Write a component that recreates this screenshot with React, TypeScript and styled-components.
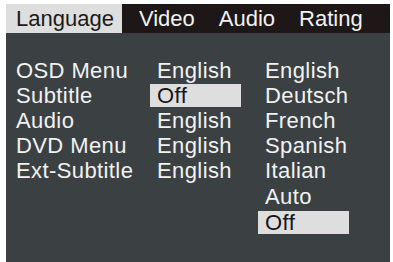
import * as React from 'react';
import styled, { createGlobalStyle } from 'styled-components';

const GlobalStyle = createGlobalStyle`
    html, body {
        margin: 0;
        padding: 0;
        background: #ffffff;
    }
    body {
        font-family: "Liberation Sans", Arial, sans-serif;
    }
`;

const tabs = ['Language', 'Video', 'Audio', 'Rating'];

const labels = ['OSD Menu', 'Subtitle', 'Audio', 'DVD Menu', 'Ext-Subtitle'];
const values = ['English', 'Off', 'English', 'English', 'English'];
const options = ['English', 'Deutsch', 'French', 'Spanish', 'Italian', 'Auto', 'Off'];

export default function App() {
    return (
        <React.Fragment>
            <GlobalStyle />
            <Screen>
                <Panel>
                    <TabBar>
                        {tabs.map((tab, i) => (
                            <Tab key={tab} active={i === 0}>{tab}</Tab>
                        ))}
                    </TabBar>
                    <Body>
                        <LabelColumn>
                            {labels.map((label) => (
                                <Row key={label}>{label}</Row>
                            ))}
                        </LabelColumn>
                        <ValueColumn>
                            {values.map((value, i) => (
                                <Item key={i} selected={i === 1}>{value}</Item>
                            ))}
                        </ValueColumn>
                        <ValueColumn>
                            {options.map((option, i) => (
                                <Item key={option} selected={i === options.length - 1}>{option}</Item>
                            ))}
                        </ValueColumn>
                    </Body>
                </Panel>
            </Screen>
        </React.Fragment>
    );
}

const Screen = styled.div`
    width: 393px;
    height: 262px;
    padding: 4px 3px 0 6px;
    box-sizing: border-box;
    display: flex;
`;

const Panel = styled.div`
    flex: 1;
    display: flex;
    flex-direction: column;
    background: #3b4143;
`;

const TabBar = styled.div`
    display: flex;
    height: 29px;
    background: #1d1817;
`;

const Tab = styled.div<{ active?: boolean }>`
    display: flex;
    align-items: center;
    padding: ${(p) => (p.active ? '0 8px 0 10px' : '0 12px')};
    font-size: 22px;
    line-height: 1;
    color: ${(p) => (p.active ? '#1a1a1a' : '#f2f2f2')};
    background: ${(p) => (p.active ? '#dedede' : 'transparent')};
    &:nth-child(2) {
        padding-left: 17px;
    }
`;

const Body = styled.div`
    flex: 1;
    display: flex;
    padding: 26px 0 0 10px;
    color: #f2f2f2;
    font-size: 22px;
    letter-spacing: 0.4px;
`;

const LabelColumn = styled.div`
    width: 134px;
    display: flex;
    flex-direction: column;
`;

const ValueColumn = styled.div`
    width: 91px;
    margin-right: 17px;
    display: flex;
    flex-direction: column;
`;

const Row = styled.div`
    height: 23px;
    line-height: 23px;
    margin-bottom: 2px;
    white-space: nowrap;
    &:nth-child(n + 6) {
        margin-top: 1px;
    }
`;

const Item = styled(Row)<{ selected?: boolean }>`
    padding-left: 7px;
    color: ${(p) => (p.selected ? '#161616' : '#f2f2f2')};
    background: ${(p) => (p.selected ? '#dedede' : 'transparent')};
`;
